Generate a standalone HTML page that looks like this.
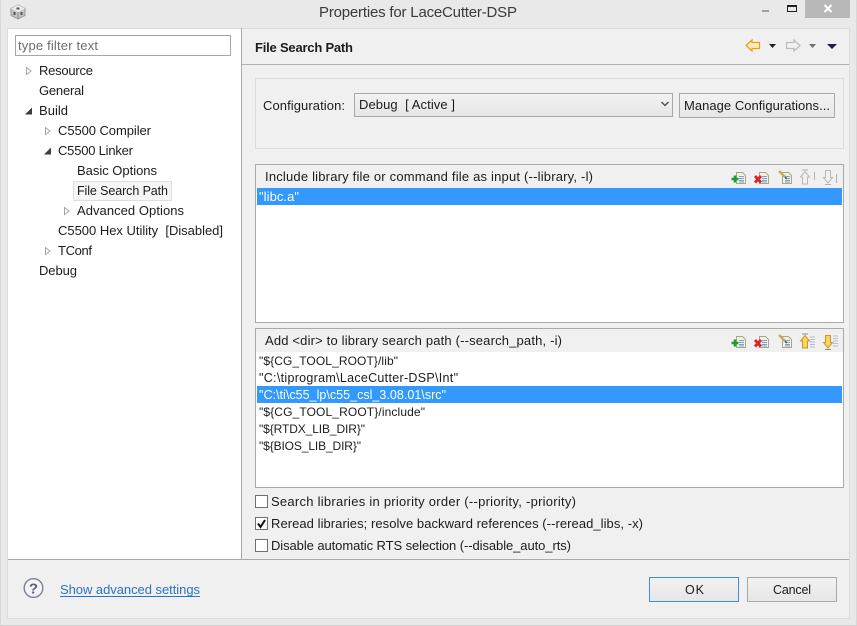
<!DOCTYPE html>
<html><head><meta charset="utf-8"><style>
html,body{margin:0;padding:0;background:#e8e8e8;width:857px;height:626px;overflow:hidden}
svg{display:block}
text{font-family:"Liberation Sans",sans-serif;font-size:13px;fill:#1c1c1c;white-space:pre}
</style></head><body>
<svg xmlns="http://www.w3.org/2000/svg" width="857" height="626" viewBox="0 0 857 626" xml:space="preserve">
<defs>
<linearGradient id="b" x1="0" y1="0" x2="0" y2="1"><stop offset="0" stop-color="#f2f2f2"/><stop offset="1" stop-color="#e6e6e6"/></linearGradient>
<g id="doc"><path d="M5.500 3.500H11.500L14.500 6.500V14.500H5.500Z" fill="#eef3ea" stroke="#a8a888"/><path d="M8 7.500h5M8 9.500h5M8 11.500h5M8 13h5" stroke="#7f9fc0"/></g>
<g id="add"><use href="#doc"/><path d="M4 6.500V13.500M.5 10H7.500" stroke="#1f9a35" stroke-width="2.600"/></g>
<g id="del"><use href="#doc"/><path d="M1 7L7 13.500M7 7L1 13.500" stroke="#e0202c" stroke-width="2.800"/></g>
<g id="edit"><use href="#doc"/><path d="M2 2L8 8" stroke="#c4ac68" stroke-width="2.600"/><path d="M8 8l2 2" stroke="#555" stroke-width="1.500"/></g>
<g id="upOn"><path d="M5 2.500L9.500 8H7.500V15H2.500V8H.5Z" fill="#fbd360" stroke="#c8962c"/><path d="M10 4h5M10 6.500h5M10 9h5M10 11.500h5M10 14h5" stroke="#aec0d4"/><path d="M2 1h6" stroke="#8a8a8a"/></g>
<g id="dnOn"><path d="M5 14L9.500 8.500H7.500V1.500H2.500V8.500H.5Z" fill="#fbd360" stroke="#c8962c"/><path d="M10 2h5M10 4.500h5M10 7h5M10 9.500h5M10 12h5" stroke="#aec0d4"/><path d="M2 15.500h6" stroke="#8a8a8a"/></g>
<g id="upOff"><path d="M5 2.500L9.500 8H7.500V15H2.500V8H.5Z" fill="#f0f0f0" stroke="#b8b8b8"/><path d="M2 1h6" stroke="#b0b0b0"/><path d="M14.500 3V11" stroke="#b0b0b0"/></g>
<g id="dnOff"><path d="M5 14L9.500 8.500H7.500V1.500H2.500V8.500H.5Z" fill="#f0f0f0" stroke="#b8b8b8"/><path d="M2 15.500h6" stroke="#b0b0b0"/><path d="M13.500 5V14" stroke="#b0b0b0"/></g>
</defs>

<!-- window frame -->
<rect width="857" height="626" fill="#e9e9e9"/>
<rect x="0" y="0" width="1" height="626" fill="#d8d8d8"/>
<rect x="856" y="0" width="1" height="626" fill="#d8d8d8"/>
<rect x="0" y="625" width="857" height="1" fill="#d0d0d0"/>

<!-- title bar -->
<g transform="translate(10,4)">
<path d="M8 1L15 4.500V11.500L8 15L1 11.500V4.500Z" fill="#c4c4c4" stroke="#9a9a9a"/>
<path d="M8 1L15 4.500L8 8L1 4.500Z" fill="#ececec"/>
<path d="M8 8V15" stroke="#8a8a8a"/>
<rect x="6.500" y="3.500" width="3" height="2" fill="#555"/>
<rect x="3.500" y="8" width="2" height="3" fill="#555"/>
<rect x="10.500" y="8" width="2" height="3" fill="#555"/>
</g>
<text x="319" y="17" style="font-size:15px;fill:#3a3a3a" textLength="198" lengthAdjust="spacing">Properties for LaceCutter-DSP</text>
<rect x="762" y="10" width="7" height="2" fill="#a0a0a0"/>
<rect x="787.500" y="5.500" width="9" height="6" fill="none" stroke="#222" stroke-width="1"/>
<rect x="787" y="5" width="10" height="2" fill="#222"/>
<rect x="805" y="0" width="45" height="18" fill="#b8b8b8"/>
<path d="M824.500 5L831.500 12M831.500 5L824.500 12" stroke="#fff" stroke-width="2"/>

<!-- client area -->
<rect x="8" y="28" width="841" height="590" fill="#f0f0f0"/>
<rect x="8" y="28" width="233" height="531" fill="#ffffff"/>
<rect x="8" y="28" width="841" height="1" fill="#dcdcdc"/>
<rect x="7" y="28" width="1" height="590" fill="#dcdcdc"/>
<rect x="849" y="28" width="1" height="590" fill="#dcdcdc"/>
<rect x="241" y="28" width="1" height="531" fill="#a9a9a9"/>
<rect x="7" y="618" width="843" height="1" fill="#dcdcdc"/>
<rect x="8" y="559" width="841" height="1" fill="#a9a9a9"/>

<!-- filter -->
<rect x="15.500" y="35.500" width="215" height="20" fill="#fff" stroke="#a6a6a6"/>
<text x="18" y="50" style="fill:#6d6d6d" textLength="80" lengthAdjust="spacing">type filter text</text>

<!-- tree -->
<path d="M26.500 67.500L31 71L26.500 74.500Z" fill="#fff" stroke="#a6a6a6"/>
<text x="39" y="75" textLength="54" lengthAdjust="spacing">Resource</text>
<text x="39" y="95" textLength="45" lengthAdjust="spacing">General</text>
<path d="M25 114.500H32V107.500Z" fill="#3c3c3c"/>
<text x="39" y="115" textLength="29" lengthAdjust="spacing">Build</text>
<path d="M45.500 127.500L50 131L45.500 134.500Z" fill="#fff" stroke="#a6a6a6"/>
<text x="58" y="135" textLength="93" lengthAdjust="spacing">C5500 Compiler</text>
<path d="M44 154.500H51V147.500Z" fill="#3c3c3c"/>
<text x="58" y="155" textLength="75" lengthAdjust="spacing">C5500 Linker</text>
<text x="77" y="175" textLength="80" lengthAdjust="spacing">Basic Options</text>
<rect x="73.500" y="181.500" width="98" height="19" fill="#f5f5f5" stroke="#dedede"/>
<text x="77" y="195" textLength="91" lengthAdjust="spacing" style="font-size:12.500px">File Search Path</text>
<path d="M64.500 207.500L69 211L64.500 214.500Z" fill="#fff" stroke="#a6a6a6"/>
<text x="77" y="215" textLength="107" lengthAdjust="spacing">Advanced Options</text>
<text x="58" y="235" textLength="165" lengthAdjust="spacing">C5500 Hex Utility  [Disabled]</text>
<path d="M45.500 247.500L50 251L45.500 254.500Z" fill="#fff" stroke="#a6a6a6"/>
<text x="58" y="255" textLength="34" lengthAdjust="spacing">TConf</text>
<text x="39" y="275" textLength="38" lengthAdjust="spacing">Debug</text>

<!-- page header -->
<text x="255" y="52" style="font-weight:bold" textLength="98" lengthAdjust="spacing">File Search Path</text>
<rect x="242" y="64" width="607" height="1" fill="#b0b0b0"/>
<path d="M746 45.500L752 40V42.500H759.500V48.500H752V51Z" fill="#fdeeb8" stroke="#e0a020" stroke-width="1.200"/>
<path d="M769 44H776L772.500 48Z" fill="#222"/>
<path d="M800 45.500L794 40V42.500H786.500V48.500H794V51Z" fill="#f0f0f0" stroke="#bcbcbc" stroke-width="1.200"/>
<path d="M809 44H816L812.500 48Z" fill="#707070"/>
<path d="M827 44H837L832 49Z" fill="#1c1c3c"/>

<!-- configuration group -->
<rect x="255.500" y="78.500" width="588" height="70" fill="#f0f0f0" stroke="#dcdcdc"/>
<text x="263" y="110" textLength="82" lengthAdjust="spacing">Configuration:</text>
<rect x="354.500" y="93.500" width="318" height="23" fill="url(#b)" stroke="#a9a9a9"/>
<text x="359" y="109" textLength="96" lengthAdjust="spacing">Debug  [ Active ]</text>
<path d="M661.500 102L665 105.500L668.500 102" fill="none" stroke="#555" stroke-width="1.500"/>
<rect x="679.500" y="93.500" width="155" height="24" fill="url(#b)" stroke="#a9a9a9"/>
<text x="684" y="110" textLength="146" lengthAdjust="spacing">Manage Configurations...</text>

<!-- table 1 -->
<rect x="255.500" y="164.500" width="588" height="158" fill="#fff" stroke="#a9a9a9"/>
<rect x="256" y="165" width="587" height="23" fill="#f0f0f0"/>
<text x="265" y="181" textLength="328" lengthAdjust="spacing">Include library file or command file as input (--library, -l)</text>
<rect x="257" y="188" width="585" height="17" fill="#3399ff"/>
<text x="259" y="201" style="fill:#fff" textLength="40" lengthAdjust="spacing">"libc.a"</text>
<use href="#add" x="731" y="169"/>
<use href="#del" x="754" y="169"/>
<use href="#edit" x="777" y="169"/>
<use href="#upOff" x="800" y="169"/>
<use href="#dnOff" x="823" y="169"/>

<!-- table 2 -->
<rect x="255.500" y="328.500" width="588" height="159" fill="#fff" stroke="#a9a9a9"/>
<rect x="256" y="329" width="587" height="23" fill="#f0f0f0"/>
<text x="265" y="345" textLength="297" lengthAdjust="spacing">Add &lt;dir&gt; to library search path (--search_path, -i)</text>
<rect x="257" y="386" width="585" height="17" fill="#3399ff"/>
<text x="259" y="365" style="font-size:12px" textLength="139" lengthAdjust="spacing">"${CG_TOOL_ROOT}/lib"</text>
<text x="259" y="382" style="font-size:12.500px" textLength="199" lengthAdjust="spacing">"C:\tiprogram\LaceCutter-DSP\Int"</text>
<text x="259" y="399" style="fill:#fff;font-size:12.500px" textLength="187" lengthAdjust="spacing">"C:\ti\c55_lp\c55_csl_3.08.01\src"</text>
<text x="259" y="416" style="font-size:12px" textLength="166" lengthAdjust="spacing">"${CG_TOOL_ROOT}/include"</text>
<text x="259" y="433" style="font-size:12px" textLength="106" lengthAdjust="spacing">"${RTDX_LIB_DIR}"</text>
<text x="259" y="450" style="font-size:12px" textLength="102" lengthAdjust="spacing">"${BIOS_LIB_DIR}"</text>
<use href="#add" x="731" y="333"/>
<use href="#del" x="754" y="333"/>
<use href="#edit" x="777" y="333"/>
<use href="#upOn" x="800" y="333"/>
<use href="#dnOn" x="823" y="334"/>

<!-- checkboxes -->
<rect x="255.500" y="495.500" width="12" height="12" fill="#fff" stroke="#707070"/>
<text x="271" y="506" textLength="305" lengthAdjust="spacing">Search libraries in priority order (--priority, -priority)</text>
<rect x="255.500" y="517.500" width="12" height="12" fill="#fff" stroke="#707070"/>
<path d="M258 523.500L260.500 527L265 520" fill="none" stroke="#111" stroke-width="2"/>
<text x="271" y="528" textLength="372" lengthAdjust="spacing">Reread libraries; resolve backward references (--reread_libs, -x)</text>
<rect x="255.500" y="539.500" width="12" height="12" fill="#fff" stroke="#707070"/>
<text x="271" y="550" textLength="300" lengthAdjust="spacing">Disable automatic RTS selection (--disable_auto_rts)</text>

<!-- footer -->
<circle cx="33.500" cy="588" r="9.300" fill="#f4f4f6" stroke="#7a8098" stroke-width="1.400"/>
<text x="33.500" y="593.500" text-anchor="middle" style="font-size:15px;font-weight:bold;fill:#5a6078">?</text>
<text x="60" y="594" style="fill:#2a72c4" textLength="140" lengthAdjust="spacing">Show advanced settings</text>
<rect x="60" y="596" width="140" height="1" fill="#2a72c4"/>
<rect x="649.500" y="577.500" width="89" height="24" fill="url(#b)" stroke="#3d8fdc"/>
<text x="685" y="594" style="font-size:12.500px" textLength="19" lengthAdjust="spacing">OK</text>
<rect x="747.500" y="577.500" width="89" height="24" fill="url(#b)" stroke="#a9a9a9"/>
<text x="773" y="594" style="font-size:12.500px" textLength="38" lengthAdjust="spacing">Cancel</text>
</svg>
</body></html>
